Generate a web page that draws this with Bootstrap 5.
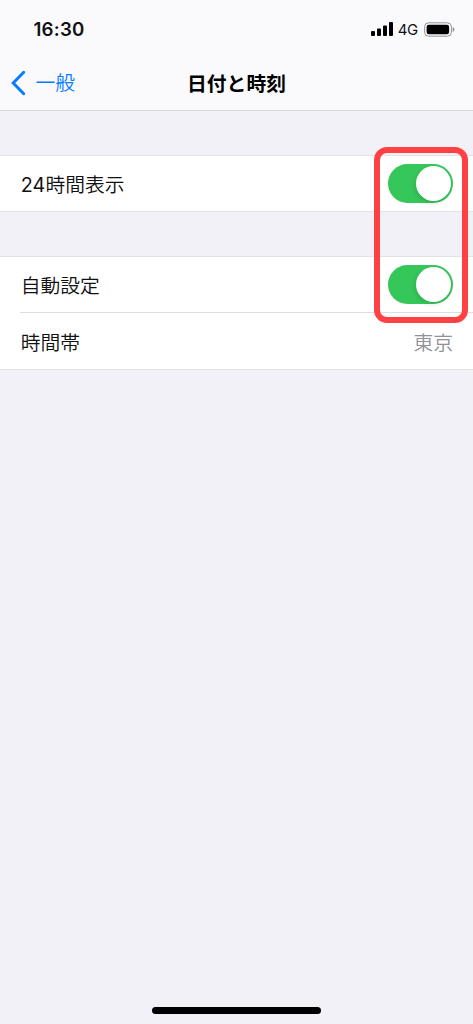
<!DOCTYPE html>
<html lang="ja">
<head>
<meta charset="utf-8">
<meta name="viewport" content="width=device-width, initial-scale=1">
<title>日付と時刻</title>
<link href="https://cdn.jsdelivr.net/npm/bootstrap@5.3.0/dist/css/bootstrap.min.css" rel="stylesheet">
<style>
body{font-family:Inter,"Noto Sans CJK JP",sans-serif;font-size:19.8px;line-height:28px;background:#f2f1f7;color:#111;height:1024px;overflow:hidden}
.top-area{height:111px;background:#fafafd;border-bottom:1px solid #d8d8dc}
.status-line{height:58px;padding:0 18px 0 33.5px}
.clock{font-size:18.7px;font-weight:600;letter-spacing:.2px;padding-top:2px}
.network{font-size:15px;line-height:20px;margin:1px 6px 0 5px;letter-spacing:-.3px}
.title-line{height:52px}
.back-link{color:#087cff;left:10.5px;top:11px}
.back-link span{font-weight:350}
.page-title{font-weight:700;font-size:19.8px;padding-top:1px;color:#000}
.settings{border-top:1px solid #e1e1e6;border-bottom:1px solid #e1e1e6}
.settings .setting{height:55px;padding:0 20px 0 0;margin-left:20px}
.settings .setting + .setting{border-top:1px solid #dedee2;height:57px}
.setting-label{padding:3px 0 0 .7px;font-weight:350}
.setting + .setting .setting-label{padding-top:4px}
.digits{font-weight:400;letter-spacing:.1px}
.switch-ios{width:65px;height:39px;border-radius:20px;background:#36c75a;padding:2px;border:0}
.switch-ios span{width:35px;height:35px;border-radius:50%;background:#fff;box-shadow:-1px 2px 5px #0002}
.zone{color:#929296;font-weight:350;padding-top:4px}
.highlight{left:374px;top:147px;width:94px;height:176px;border:6px solid #ff4143;border-radius:13px;pointer-events:none}
.home-bar{width:169px;height:7px;border-radius:4px;background:#000;margin-bottom:10px}
</style>
</head>
<body class="d-flex flex-column position-relative">
<header class="top-area flex-shrink-0">
  <div class="status-line d-flex align-items-center justify-content-between">
    <span class="clock">16:30</span>
    <div class="d-flex align-items-center">
      <svg width="22" height="14" viewBox="0 0 22 14" aria-hidden="true"><rect y="9" width="4" height="5" rx="1"/><rect x="6" y="6.5" width="4" height="7.5" rx="1"/><rect x="12" y="3.5" width="4" height="10.5" rx="1"/><rect x="18" width="4" height="14" rx="1"/></svg>
      <span class="network">4G</span>
      <svg width="31" height="15" viewBox="0 0 31 15" aria-hidden="true"><rect x=".6" y=".8" width="26.8" height="13.4" rx="4" fill="none" stroke="#929295" stroke-width="1"/><rect x="2.6" y="2.7" width="22.5" height="9.6" rx="2.2"/><path d="M28.7 5q1.8.8 1.8 2.5t-1.8 2.5z" fill="#929295"/></svg>
    </div>
  </div>
  <div class="title-line position-relative d-flex align-items-center justify-content-center">
    <a href="#" class="back-link position-absolute d-flex align-items-center text-decoration-none">
      <svg width="25" height="26" viewBox="0 0 25 26" aria-hidden="true"><path d="M12.7 2.3 2.2 13l10.5 10.7" fill="none" stroke="currentColor" stroke-width="3" stroke-linecap="round" stroke-linejoin="miter"/></svg><span>一般</span>
    </a>
    <h1 class="page-title m-0">日付と時刻</h1>
  </div>
</header>
<main class="flex-grow-1">
  <section class="settings bg-white" style="margin-top:44px">
    <div class="setting d-flex align-items-center justify-content-between"><span class="setting-label"><span class="digits">24</span>時間表示</span><button class="switch-ios d-flex justify-content-end" role="switch" aria-checked="true" aria-label="24時間表示"><span></span></button></div>
  </section>
  <section class="settings bg-white" style="margin-top:44px">
    <div class="setting d-flex align-items-center justify-content-between"><span class="setting-label">自動設定</span><button class="switch-ios d-flex justify-content-end" role="switch" aria-checked="true" aria-label="自動設定"><span></span></button></div>
    <div class="setting d-flex align-items-center justify-content-between"><span class="setting-label">時間帯</span><span class="zone">東京</span></div>
  </section>
</main>
<div class="highlight position-absolute"></div>
<div class="home-bar flex-shrink-0 align-self-center"></div>
</body>
</html>
